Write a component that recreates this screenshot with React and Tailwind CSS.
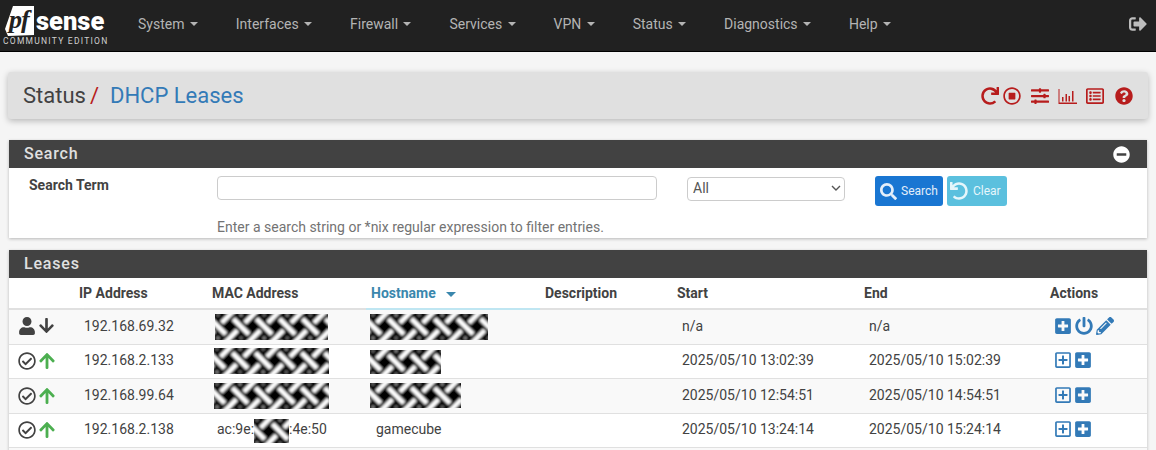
import { useId } from "react";
import {
  FaArrowDown,
  FaArrowUp,
  FaMinusCircle,
  FaPencilAlt,
  FaPlusSquare,
  FaPowerOff,
  FaQuestionCircle,
  FaRedo,
  FaRegCheckCircle,
  FaRegListAlt,
  FaRegPlusSquare,
  FaRegStopCircle,
  FaSearch,
  FaSignOutAlt,
  FaSlidersH,
  FaUndo,
  FaUser,
} from "react-icons/fa";

const NAV = ["System", "Interfaces", "Firewall", "Services", "VPN", "Status", "Diagnostics", "Help"];

function Logo() {
  return (
    <div className="relative h-[51px] w-[119px] shrink-0">
      <svg className="absolute left-[5px] top-[6px]" width="29" height="30" viewBox="0 0 29 30">
        <path d="M8 0H29V29L3 30L0 23Z" fill="#fff" />
      </svg>
      <span className="absolute left-[9px] top-[8px] font-['Liberation_Serif',serif] text-[26px] font-bold italic leading-[24px] tracking-[-1px] text-[#212121]">
        pf
      </span>
      <span className="absolute left-[36px] top-[6px] font-['Roboto',sans-serif] text-[25.5px] font-black leading-[30px] text-white">
        sense
      </span>
      <span className="absolute left-[3px] top-[37px] whitespace-nowrap font-['Roboto',sans-serif] text-[8.5px] leading-[8px] tracking-[1.25px] text-[#d0d0d0]">
        COMMUNITY EDITION
      </span>
    </div>
  );
}

function Navbar() {
  return (
    <div className="flex h-[52px] items-center border-b border-black bg-[#212121] text-sm text-[#b4b4b4]">
      <Logo />
      {NAV.map((item) => (
        <div key={item} className="flex items-center px-[19px] pb-[4px]">
          {item}
          <span className="ml-[5.35px] mt-[1px] border-x-[4px] border-t-[4px] border-x-transparent border-t-[#b4b4b4]" />
        </div>
      ))}
      <FaSignOutAlt className="mb-[3px] ml-auto mr-[9px] text-[18px] text-[#bdbdbd]" />
    </div>
  );
}

function BarChartIcon() {
  return (
    <svg width="19" height="16" viewBox="0 0 18 16" fill="#b71c1c">
      <path d="M0 1h1v13.6h18V16H0z" />
      <path d="M3.5 9h1.5v4.5H3.5zM7 6h1.5v7.500H7zM10 8h1.500v5.500H10zM13.500 3h1.500v10.500h-1.500z" />
    </svg>
  );
}

function Breadcrumb() {
  return (
    <div className="mx-2 mt-5 flex h-[47px] items-center justify-between rounded-[3px] bg-[#e0e0e0] pl-[15px] pr-[15px] shadow-[0_2px_6px_rgba(0,0,0,0.25)]">
      <div className="text-[22px]">
        <span className="text-[#424242]">Status</span>
        <span className="ml-[4px] text-[#b71c1c]">/</span>
        <span className="ml-[11px] text-[#337ab7]">DHCP Leases</span>
      </div>
      <div className="flex items-center text-[#b71c1c]">
        <FaRedo className="text-[18px]" />
        <FaRegStopCircle className="ml-[4px] text-[18px]" />
        <FaSlidersH className="ml-[10px] text-[18px]" />
        <span className="ml-[9px] flex"><BarChartIcon /></span>
        <FaRegListAlt className="ml-[9px] text-[18px]" />
        <FaQuestionCircle className="ml-[11px] text-[18px]" />
      </div>
    </div>
  );
}

function PanelHeading({ title, children }) {
  return (
    <div className="flex h-[28px] items-center justify-between bg-[#424242] pl-[15px] pr-[17px] text-base font-medium tracking-[0.8px] text-[#e0e0e0]">
      {title}
      {children}
    </div>
  );
}

function SearchPanel() {
  return (
    <div className="ml-[9px] mr-[9px] mt-[21px] h-[98px] bg-white shadow-[0_1px_3px_rgba(0,0,0,0.25)]">
      <PanelHeading title="Search">
        <FaMinusCircle className="text-[17px] text-white" />
      </PanelHeading>
      <div className="flex items-start pt-[8px]">
        <div className="-mt-[1px] w-[208px] pl-[20px] text-sm font-bold text-[#424242]">Search Term</div>
        <div>
          <input className="block h-[24px] w-[440px] rounded-[4px] border border-[#ccc] bg-white" />
          <div className="mt-[17px] text-sm text-[#737373]">
            Enter a search string or *nix regular expression to filter entries.
          </div>
        </div>
        <div className="relative ml-[30px] h-[24px] w-[158px]">
          <select className="h-full w-full appearance-none rounded-[4px] border border-[#ccc] bg-white pb-[4px] pl-[5px] text-sm text-[#555]">
            <option>All</option>
          </select>
          <svg className="pointer-events-none absolute right-[4px] top-[9px]" width="10" height="6" viewBox="0 0 10 6" fill="none" stroke="#555" strokeWidth="1.4">
            <path d="M1 1l4 4 4-4" />
          </svg>
        </div>
        <button className="ml-[30px] flex h-[30px] w-[68px] items-center rounded-[3px] bg-[#1976d2] pl-[5px] text-xs text-[#e3eefa]">
          <FaSearch className="mr-[4px] text-[17px]" />
          Search
        </button>
        <button className="ml-[4px] flex h-[30px] w-[60px] items-center rounded-[3px] bg-[#5bc0de] pl-[3px] text-xs text-[#e6f6fb]">
          <FaUndo className="mr-[5px] text-[18px]" />
          Clear
        </button>
      </div>
    </div>
  );
}

// redacted values in the reference: blurred black and white weave
function Smudge({ width, height }) {
  const id = useId();
  return (
    <svg width={width} height={height} className="block">
      <defs>
        <pattern id={`${id}p`} width="34" height="34" patternUnits="userSpaceOnUse" patternTransform="translate(3 1) rotate(45) scale(0.96)">
          <rect width="34" height="34" fill="#000" />
          <g stroke="#fff" strokeWidth="5">
            <path d="M0 8.500H20M31 8.500H34M14 25.500H34M0 25.500H3" />
            <path d="M25.500 0V20M25.500 31V34M8.500 14V34M8.500 0V3" />
          </g>
          <circle cx="17" cy="17" r="2" fill="#888" />
          <circle cx="0" cy="0" r="2" fill="#666" />
          <circle cx="34" cy="0" r="2" fill="#666" />
          <circle cx="0" cy="34" r="2" fill="#666" />
          <circle cx="34" cy="34" r="2" fill="#666" />
        </pattern>
        <filter id={`${id}f`} x="-5%" y="-5%" width="110%" height="110%">
          <feGaussianBlur stdDeviation="1.300" />
        </filter>
      </defs>
      <rect x="-6" y="-6" width={width + 12} height={height + 12} fill={`url(#${id}p)`} filter={`url(#${id}f)`} />
    </svg>
  );
}

const ROWS = [
  {
    kind: "static",
    height: "h-[35px]",
    ip: "192.168.69.32",
    mac: <div className="-ml-[2px]"><Smudge width={113} height={26} /></div>,
    host: <div className="-ml-[6px]"><Smudge width={118} height={26} /></div>,
    start: "n/a",
    end: "n/a",
  },
  {
    height: "h-[34px]",
    ip: "192.168.2.133",
    mac: <div className="-ml-[3px]"><Smudge width={115} height={26} /></div>,
    host: <div className="-ml-[6px] pt-[1px]"><Smudge width={71} height={24} /></div>,
    start: "2025/05/10 13:02:39",
    end: "2025/05/10 15:02:39",
  },
  {
    height: "h-[35px]",
    ip: "192.168.99.64",
    mac: <div className="-ml-[3px]"><Smudge width={115} height={26} /></div>,
    host: <div className="-ml-[6px]"><Smudge width={91} height={25} /></div>,
    start: "2025/05/10 12:54:51",
    end: "2025/05/10 14:54:51",
  },
  {
    height: "h-[34px]",
    ip: "192.168.2.138",
    mac: (
      <div className="flex items-center">
        ac:9e:
        <div className="mt-[4px]"><Smudge width={35} height={24} /></div>
        :4e:50
      </div>
    ),
    host: "gamecube",
    start: "2025/05/10 13:24:14",
    end: "2025/05/10 15:24:14",
  },
];

function LeaseRow({ row, index }) {
  const isStatic = row.kind === "static";
  const textual = typeof row.host === "string";
  return (
    <tr className={`${row.height} border-t border-[#e0e0e0] text-sm text-[#424242] ${index % 2 === 0 ? "bg-[#f9f9f9]" : "bg-white"}`}>
      <td className={`pl-[9px] ${isStatic ? "pb-[2px]" : ""}`}>
        <div className="flex items-center">
          {isStatic ? (
            <>
              <FaUser className="text-[18px]" />
              <FaArrowDown className="ml-[2px] text-[17px]" />
            </>
          ) : (
            <>
              <FaRegCheckCircle className="text-[18px]" />
              <FaArrowUp className="ml-[2px] text-[18px] text-[#4caf50]" />
            </>
          )}
        </div>
      </td>
      <td className="pb-[2px] pl-[10px]">{row.ip}</td>
      <td className={`pl-[10px] ${textual ? "pb-[2px]" : ""}`}>{row.mac}</td>
      <td className={`pl-[10px] ${textual ? "pb-[2px]" : ""}`}>{row.host}</td>
      <td />
      <td className="pb-[2px] pl-[10px]">{row.start}</td>
      <td className="pb-[2px] pl-[10px]">{row.end}</td>
      <td className="pb-[2px] pl-[9px]">
        <div className="flex items-center text-[#337ab7]">
          {isStatic ? (
            <>
              <FaPlusSquare className="text-[18px]" />
              <FaPowerOff className="ml-[3px] text-[18px]" />
              <FaPencilAlt className="ml-[3px] text-[18px]" />
            </>
          ) : (
            <>
              <FaRegPlusSquare className="text-[18px]" />
              <FaPlusSquare className="ml-[2px] text-[18px]" />
            </>
          )}
        </div>
      </td>
    </tr>
  );
}

function LeasesPanel() {
  const th = "pl-[5px] text-left text-sm font-bold text-[#424242]";
  return (
    <div className="ml-[9px] mr-[9px] mt-[12px] bg-white shadow-[0_1px_3px_rgba(0,0,0,0.25)]">
      <PanelHeading title="Leases" />
      <table className="w-full table-fixed border-collapse">
        <colgroup>
          <col className="w-[65px]" />
          <col className="w-[133px]" />
          <col className="w-[159px]" />
          <col className="w-[174px]" />
          <col className="w-[132px]" />
          <col className="w-[187px]" />
          <col className="w-[186px]" />
          <col />
        </colgroup>
        <thead>
          <tr className="h-[31px] border-b-[2px] border-[#e0e0e0]">
            <th />
            <th className={th}>IP Address</th>
            <th className={th}>MAC Address</th>
            <th className="border-b-[2px] border-[#bfe6f2] pl-[5px] text-left text-sm font-bold text-[#3a87ad]">
              <span className="flex items-center">
                Hostname
                <span className="ml-[10px] mt-[3px] border-x-[5px] border-t-[5px] border-x-transparent border-t-[#3a87ad]" />
              </span>
            </th>
            <th className={th}>Description</th>
            <th className={th}>Start</th>
            <th className={th}>End</th>
            <th className={th}>Actions</th>
          </tr>
        </thead>
        <tbody>
          {ROWS.map((row, i) => (
            <LeaseRow key={row.ip} row={row} index={i} />
          ))}
          <tr className="h-[34px] border-t border-[#e0e0e0] bg-[#f9f9f9]">
            <td colSpan={8} />
          </tr>
        </tbody>
      </table>
    </div>
  );
}

export default function App() {
  return (
    <div className="h-[450px] overflow-hidden bg-[#f5f5f5] font-['Roboto',sans-serif]">
      <Navbar />
      <Breadcrumb />
      <SearchPanel />
      <LeasesPanel />
    </div>
  );
}
